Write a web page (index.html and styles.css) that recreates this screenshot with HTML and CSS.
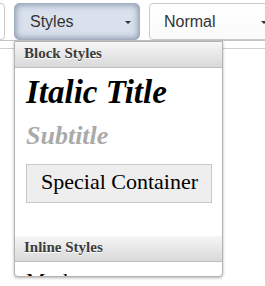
FILE: index.html
```html
<!DOCTYPE html>
<html>
<head>
<meta charset="utf-8">
<link rel="stylesheet" href="styles.css">
</head>
<body>
<div class="page">
  <div class="toolbar">
    <div class="btn btn-stub"></div>
    <div class="btn btn-styles"><span class="label">Styles</span><span class="caret"></span></div>
    <div class="btn btn-format"><span class="label">Normal</span><span class="caret"></span></div>
  </div>
  <div class="rule"></div>
  <div class="menu">
    <div class="group-head">Block Styles</div>
    <div class="item item-title">Italic Title</div>
    <div class="item item-subtitle">Subtitle</div>
    <div class="item item-special"><div class="special-box">Special Container</div></div>
    <div class="group-head">Inline Styles</div>
    <div class="item item-marker">Marker</div>
  </div>
</div>
</body>
</html>
```
FILE: styles.css
```css
html, body {
  margin: 0;
  padding: 0;
  background: #fff;
  overflow: hidden;
}
.page {
  position: relative;
  width: 265px;
  height: 286px;
  overflow: hidden;
}
.toolbar {
  display: flex;
  gap: 9px;
  padding-top: 3px;
  height: 37px;
  border-bottom: 1px solid #c4c4c4;
  margin-bottom: 7px;
}
.rule {
  border-top: 1px solid #cfcfcf;
}
.btn {
  box-sizing: border-box;
  height: 37px;
  border-radius: 4px;
  display: flex;
  align-items: center;
  font-family: "Liberation Sans", Arial, sans-serif;
  font-size: 16px;
  color: #333;
  flex: none;
}
.btn-stub {
  width: 30px;
  margin-left: -25px;
  border: 1px solid #c8c8c8;
  background: #fff;
}
.btn-styles {
  width: 126px;
  padding-left: 15px;
  border: 1px solid #a3afc0;
  border-radius: 5px;
  background: #d9e1ed;
  box-shadow: inset 0 0 6px 1px rgba(70, 90, 120, 0.55);
}
.btn-format {
  width: 130px;
  padding-left: 14px;
  border: 1px solid #cacaca;
  background: linear-gradient(#fff, #fafafa);
}
.label {
  flex: 1;
}
.caret {
  width: 0;
  height: 0;
  border-left: 3px solid transparent;
  border-right: 3px solid transparent;
  border-top: 3px solid #333;
  margin-right: 8px;
  margin-top: 1px;
}
.btn-format .caret {
  margin-right: 11px;
}
.menu {
  position: absolute;
  left: 14px;
  top: 41px;
  width: 209px;
  height: 236px;
  box-sizing: border-box;
  border: 1px solid #b4b4b4;
  border-radius: 0 0 4px 4px;
  background: #fff;
  box-shadow: 0 1px 3px rgba(0, 0, 0, 0.3);
  overflow: hidden;
  font-family: "Liberation Serif", "Times New Roman", serif;
}
.group-head {
  height: 20px;
  line-height: 20px;
  padding: 1px 0 4px 9px;
  font-size: 15px;
  font-weight: bold;
  color: #3c3c3c;
  text-shadow: 0 1px 0 #fff;
  background: linear-gradient(#f6f6f6, #d9d9d9);
  border-bottom: 1px solid #bdbdbd;
  white-space: nowrap;
}
.item {
  padding: 0 11px;
  color: #000;
  white-space: nowrap;
}
.item-title {
  padding-top: 4px;
  padding-bottom: 4px;
  font-size: 33px;
  line-height: 40px;
  font-weight: bold;
  font-style: italic;
}
.item-subtitle {
  padding-top: 4px;
  padding-bottom: 4px;
  font-size: 26px;
  line-height: 32px;
  font-weight: bold;
  font-style: italic;
  color: #aaa;
}
.item-special {
  padding-top: 8px;
  padding-bottom: 33px;
}
.special-box {
  width: 186px;
  box-sizing: border-box;
  padding: 2px 0 6px 14px;
  border: 1px solid #c9c9c9;
  background: #eee;
  font-size: 22px;
  line-height: 29px;
}
.item-marker {
  padding-top: 4px;
  font-size: 22px;
  line-height: 29px;
}
```
